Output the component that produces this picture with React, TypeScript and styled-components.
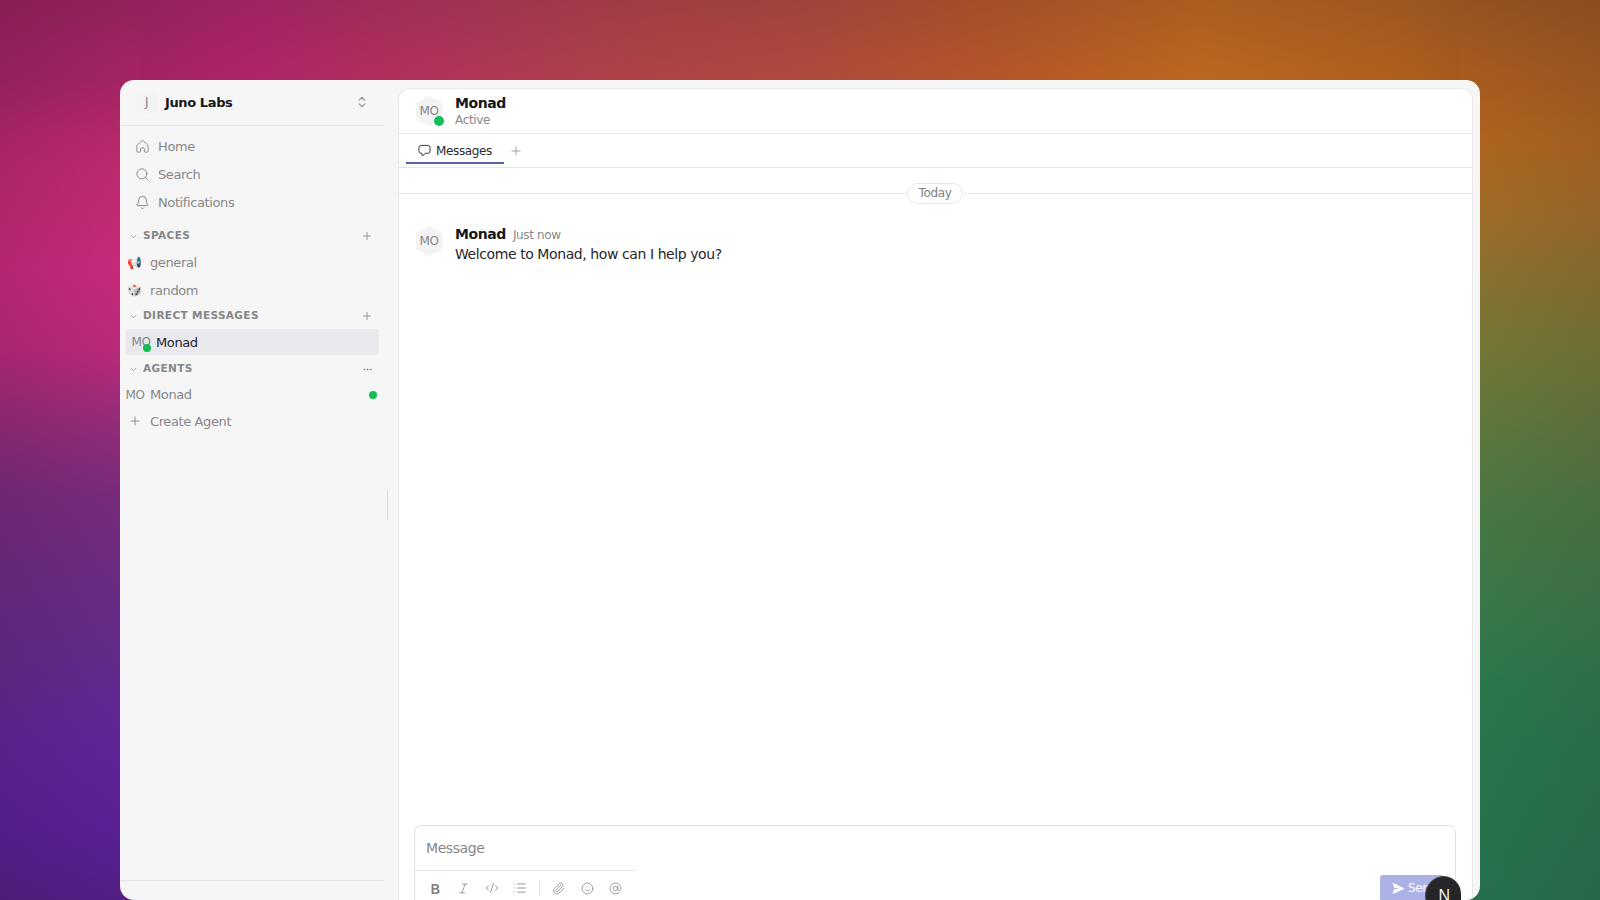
import React from "react";
import styled, { createGlobalStyle, css } from "styled-components";
import { AtSign, Bell, ChevronDown, CodeXml, Ellipsis, Italic, List, Paperclip, Plus, Search, Smile, ChevronsUpDown } from "lucide-react";

const GlobalStyle = createGlobalStyle`
  * { box-sizing: border-box; letter-spacing: -0.03em; }
  body { margin: 0; overflow: hidden; font-family: "DejaVu Sans", sans-serif; font-size: 13px; color: #1b1b1f; }
  svg { display: block; flex: none; }
`;

const Desktop = styled.div`
  width: 1600px;
  height: 900px;
  padding: 80px 120px 0;
  overflow: hidden;
  background:
    linear-gradient(to bottom, rgba(30, 20, 40, 0.15), rgba(30, 20, 40, 0.05) 70px, transparent 140px),
    linear-gradient(to right, rgba(40, 10, 40, 0.13), transparent 130px),
    linear-gradient(to left, rgba(60, 30, 40, 0.15), transparent 190px),
    linear-gradient(to bottom, #a82464 0, #ab2566 80px, #bf2a70 170px, #c92a7b 270px, #bb2a7a 350px, #922c7a 430px, #782b7c 500px, #6b2c82 575px, #632a8c 660px, #602598 740px, #5a2096 830px, #521f85 900px) 0 0 / 140px 900px no-repeat,
    linear-gradient(to bottom, #b0601e 0, #b3621e 80px, #b3691f 140px, #a47128 215px, #8c7630 280px, #767c38 350px, #5f7c3e 430px, #477c46 520px, #3a7d4b 600px, #2b7c4e 680px, #257a4e 760px, #257450 900px) 1460px 0 / 140px 900px no-repeat,
    linear-gradient(to right, #a82464 140px, #b5256c 250px, #b8355c 440px, #b5434c 600px, #b54c3f 800px, #bb5a28 1000px, #c36b20 1200px, #b8651f 1350px, #b0601e 1460px);
`;

const Window = styled.div`
  display: flex;
  height: 820px;
  border-radius: 14px;
  overflow: hidden;
  background: #f6f6f7;
`;

const Sidebar = styled.aside`
  width: 264px;
  display: flex;
  flex-direction: column;
  color: #868689;
`;

const Workspace = styled.header`
  display: flex;
  align-items: center;
  height: 46px;
  padding: 0 15px 1px 16px;
  border-bottom: 1px solid #e8e8ea;
`;

const WorkspaceTile = styled.span`
  width: 21px;
  height: 21px;
  border-radius: 5px;
  background: #f3f3f4;
  display: grid;
  place-items: center;
  font-size: 12px;
  margin-right: 8px;
`;

const WorkspaceName = styled.strong`
  flex: 1;
  color: #161619;
`;

const Nav = styled.nav`
  padding: 7px 6px 5px;
`;

const NavItem = styled.a`
  display: flex;
  align-items: center;
  gap: 8px;
  height: 27.7px;
  padding-left: 9px;
`;

const SectionHead = styled.div<{ $height: number; $lift: number }>`
  display: flex;
  align-items: center;
  height: ${(p) => p.$height}px;
  padding: 0 11px ${(p) => p.$lift}px 9px;
  font-size: 10.5px;
  font-weight: 700;
`;

const SectionTitle = styled.span`
  flex: 1;
  margin-left: 5px;
  letter-spacing: 0.38px;
`;

const SectionAction = styled.span`
  padding-top: 2px;
`;

const SectionChevron = styled(ChevronDown)`
  margin-top: 2px;
`;

const Row = styled.div<{ $active?: boolean; $height: number }>`
  display: flex;
  align-items: center;
  height: ${(p) => p.$height}px;
  margin: 0 5px 0 6px;
  padding-right: 2px;
  ${(p) => p.$active && css`
    color: #252529;
    background: #e9e8ed;
    border-radius: 3px;
    padding-left: 6px;
  `}
`;

const Lead = styled.span`
  position: relative;
  width: 18px;
  margin-right: 6px;
  display: flex;
  justify-content: center;
  font-size: 12px;
  color: #868689;
`;

const Emoji = styled.span`
  font-family: "Noto Color Emoji", "DejaVu Sans", sans-serif;
  font-size: 12px;
  line-height: 14px;
`;

const Dot = styled.i<{ $size: number }>`
  width: ${(p) => p.$size}px;
  height: ${(p) => p.$size}px;
  border-radius: 50%;
  background: #14bd55;
`;

const RowDot = styled(Dot)`
  margin-left: auto;
`;

const LeadDot = styled(Dot)`
  position: absolute;
  right: -1px;
  bottom: -3px;
`;

const SidebarFooter = styled.footer`
  margin-top: auto;
  height: 20px;
  border-top: 1px solid #e3e3e5;
`;

const ResizeGutter = styled.div`
  width: 14px;
  display: flex;
  align-items: center;
  padding: 29px 0 0 3px;

  &::before { content: ""; width: 1px; height: 30px; background: #dcdcde; }
`;

const Panel = styled.main`
  width: 1075px;
  margin-top: 8px;
  display: flex;
  flex-direction: column;
  border: 1px solid #e9e9eb;
  border-bottom: 0;
  border-radius: 12px 12px 0 0;
  background: #fff;
`;

const ChatHeader = styled.header`
  display: flex;
  align-items: center;
  height: 45px;
  padding: 0 16px;
  border-bottom: 1px solid #e6e6e8;
`;

const Avatar = styled.div`
  position: relative;
  width: 28px;
  height: 30px;
  margin-right: 12px;
  display: grid;
  place-items: center;
  font-size: 12px;
  color: #868689;
`;

const HexBack = styled.div`
  grid-area: 1 / 1;
  width: 27px;
  height: 30px;
  background: #f3f3f5;
  clip-path: polygon(50% 0, 96% 22%, 100% 28%, 100% 72%, 96% 78%, 50% 100%, 4% 78%, 0 72%, 0 28%, 4% 22%);
`;

const Initials = styled.span`
  grid-area: 1 / 1;
  position: relative;
`;

const AvatarDot = styled(Dot)`
  position: absolute;
  right: -1px;
  bottom: 0;
`;

const Identity = styled.div`
  padding-top: 2px;
  line-height: 17px;
  font-size: 14px;
  color: #161619;
`;

const Muted = styled.div`
  font-size: 12px;
  color: #88888b;
  line-height: 17px;
`;

const Tabs = styled.div`
  display: flex;
  height: 34px;
  padding-left: 7px;
  border-bottom: 1px solid #e6e6e8;
  color: #98989c;
`;

const Tab = styled.div`
  display: flex;
  align-items: center;
  gap: 5px;
  width: 98px;
  height: 30px;
  padding: 5px 0 0 12px;
  font-size: 12px;
  color: #2b2b2f;
  border-bottom: 2px solid #5c62a8;
`;

const AddTab = styled.button`
  width: 24px;
  height: 31px;
  display: grid;
  place-items: center;
  border: 0;
  padding: 2px 0 0;
  background: none;
  color: inherit;
`;

const DayDivider = styled.div`
  display: flex;
  align-items: center;
  height: 20px;
  margin-top: 15px;

  &::before, &::after { content: ""; flex: 1; height: 1px; background: #e6e6e8; }
`;

const DayPill = styled.span`
  width: 56px;
  height: 21px;
  margin-right: 1px;
  border: 1px solid #e6e6e8;
  border-radius: 11px;
  display: grid;
  place-items: center;
  font-size: 12px;
  color: #808085;
`;

const Message = styled.article`
  display: flex;
  align-items: flex-start;
  margin: 22px 16px 0;

  > ${Avatar} { margin-top: 1px; }
`;

const MessageMeta = styled.div`
  display: flex;
  align-items: baseline;
  gap: 7px;
  font-size: 14px;
  line-height: 19px;
  color: #161619;
`;

const MessageText = styled.p`
  margin: 0;
  font-size: 14px;
  line-height: 20px;
  color: #27272b;
`;

const Composer = styled.section`
  display: flex;
  flex-direction: column;
  margin: auto 16px 0 15px;
  height: 75px;
  border: 1px solid #e2e2e5;
  border-bottom: 0;
  border-radius: 8px 8px 0 0;
`;

const Placeholder = styled.div`
  height: 44px;
  padding: 0 11px;
  line-height: 44px;
  font-size: 14px;
  color: #868689;
`;

const ComposerBar = styled.div`
  display: flex;
  justify-content: space-between;
  height: 30px;
`;

const Tools = styled.div`
  width: 221px;
  display: flex;
  align-items: center;
  padding: 5px 0 0 6px;
  border-top: 1px solid #e6e6e8;
  color: #909095;
`;

const Tool = styled.span`
  width: 28.4px;
  display: grid;
  place-items: center;
`;

const BoldMark = styled.b`
  font: 700 15px "Liberation Sans", sans-serif;
  color: #7e7e83;
  transform: scaleX(0.85);
`;

const ToolRule = styled.i`
  width: 1px;
  height: 14px;
  margin: 0 5px 0 4px;
  background: #dedee1;
`;

const SendButton = styled.button`
  display: flex;
  align-items: center;
  gap: 3px;
  width: 64px;
  height: 26px;
  margin: 5px 11px 0 0;
  padding: 0 0 0 12px;
  border: 0;
  border-radius: 3px;
  background: #acb2e6;
  color: #fff;
  font: 12px "DejaVu Sans", sans-serif;
`;

const DevBadge = styled.div`
  position: absolute;
  left: 1425px;
  top: 876px;
  width: 36px;
  height: 24px;
  overflow: hidden;
  border-radius: 18px 18px 0 0;

  &::before {
    content: "N";
    display: grid;
    place-items: center;
    width: 36px;
    height: 36px;
    padding-top: 1px;
    border-radius: 50%;
    border: 1px solid #47474b;
    background: #262628;
    color: #f4f4f4;
    font: 16px "Liberation Sans", sans-serif;
  }
`;

const HomeIcon = () => (
  <svg width="15" height="15" viewBox="0 0 16 16" fill="none" stroke="currentColor" strokeWidth="1" strokeLinejoin="round">
    <path d="M7.3 1.800a1 1 0 0 1 1.400 0l4.800 4.500a1.600 1.600 0 0 1 .5 1.200V13a1 1 0 0 1-1 1h-2a1 1 0 0 1-1-1v-2.500a1 1 0 0 0-1-1H7a1 1 0 0 0-1 1V13a1 1 0 0 1-1 1H3a1 1 0 0 1-1-1V7.500a1.600 1.600 0 0 1 .5-1.200z" />
  </svg>
);

const ChatIcon = () => (
  <svg width="13" height="13" viewBox="0 0 14 14" fill="none" stroke="currentColor" strokeWidth="1" strokeLinejoin="round">
    <path d="M3.500 1.500h7a2.500 2.500 0 0 1 2.500 2.500v3.500a2.500 2.500 0 0 1-2.500 2.500H8L5.200 12.400q-.9.600-.9-.4V10h-.8A2.500 2.500 0 0 1 1 7.500V4a2.500 2.500 0 0 1 2.500-2.500z" />
  </svg>
);

const SendIcon = () => (
  <svg width="13" height="13" viewBox="0 0 14 14" fill="currentColor">
    <path d="M1.300 1.200 13 6.600q.7.400 0 .8L1.300 12.800q-.8.300-.6-.5L2.200 7.700 8.200 7 2.200 6.300.7 1.700q-.2-.8.6-.5z" />
  </svg>
);

const HexAvatar = ({ online }: { online?: boolean }) => (
  <Avatar>
    <HexBack />
    <Initials>MO</Initials>
    {online && <AvatarDot $size={10} />}
  </Avatar>
);

type SectionProps = { title: string; height: number; lift?: number; more?: boolean };

const Section = ({ title, height, lift = 0, more }: SectionProps) => (
  <SectionHead $height={height} $lift={lift}>
    <SectionChevron size={9} strokeWidth={2} />
    <SectionTitle>{title}</SectionTitle>
    <SectionAction>
      {more ? <Ellipsis size={11} strokeWidth={2} /> : <Plus size={12} strokeWidth={1.7} />}
    </SectionAction>
  </SectionHead>
);

export default function App() {
  return (
    <Desktop>
      <GlobalStyle />
      <Window>
        <Sidebar>
          <Workspace>
            <WorkspaceTile>J</WorkspaceTile>
            <WorkspaceName>Juno Labs</WorkspaceName>
            <ChevronsUpDown size={14} strokeWidth={1.8} />
          </Workspace>
          <Nav>
            <NavItem><HomeIcon />Home</NavItem>
            <NavItem><Search size={15} strokeWidth={1.5} />Search</NavItem>
            <NavItem><Bell size={15} strokeWidth={1.6} />Notifications</NavItem>
          </Nav>
          <Section title="SPACES" height={28} />
          <Row $height={27}><Lead><Emoji>📢</Emoji></Lead>general</Row>
          <Row $height={28}><Lead><Emoji>🎲</Emoji></Lead>random</Row>
          <Section title="DIRECT MESSAGES" height={25} lift={3} />
          <Row $height={26} $active><Lead>MO<LeadDot $size={8} /></Lead>Monad</Row>
          <Section title="AGENTS" height={26} more />
          <Row $height={27}><Lead>MO</Lead>Monad<RowDot $size={8} /></Row>
          <Row $height={26}><Lead><Plus size={14} strokeWidth={1.5} /></Lead>Create Agent</Row>
          <SidebarFooter />
        </Sidebar>
        <ResizeGutter />
        <Panel>
          <ChatHeader>
            <HexAvatar online />
            <Identity>
              <strong>Monad</strong>
              <Muted>Active</Muted>
            </Identity>
          </ChatHeader>
          <Tabs>
            <Tab><ChatIcon />Messages</Tab>
            <AddTab><Plus size={14} strokeWidth={1.5} /></AddTab>
          </Tabs>
          <DayDivider><DayPill>Today</DayPill></DayDivider>
          <Message>
            <HexAvatar />
            <div>
              <MessageMeta><strong>Monad</strong><Muted>Just now</Muted></MessageMeta>
              <MessageText>Welcome to Monad, how can I help you?</MessageText>
            </div>
          </Message>
          <Composer>
            <Placeholder>Message</Placeholder>
            <ComposerBar>
              <Tools>
                <Tool><BoldMark>B</BoldMark></Tool>
                <Tool><Italic size={13} strokeWidth={1.6} /></Tool>
                <Tool><CodeXml size={14} strokeWidth={1.6} /></Tool>
                <Tool><List size={14} strokeWidth={1.6} /></Tool>
                <ToolRule />
                <Tool><Paperclip size={13} strokeWidth={1.6} /></Tool>
                <Tool><Smile size={13} strokeWidth={1.6} /></Tool>
                <Tool><AtSign size={13} strokeWidth={1.6} /></Tool>
              </Tools>
              <SendButton><SendIcon />Send</SendButton>
            </ComposerBar>
          </Composer>
        </Panel>
      </Window>
      <DevBadge />
    </Desktop>
  );
}
